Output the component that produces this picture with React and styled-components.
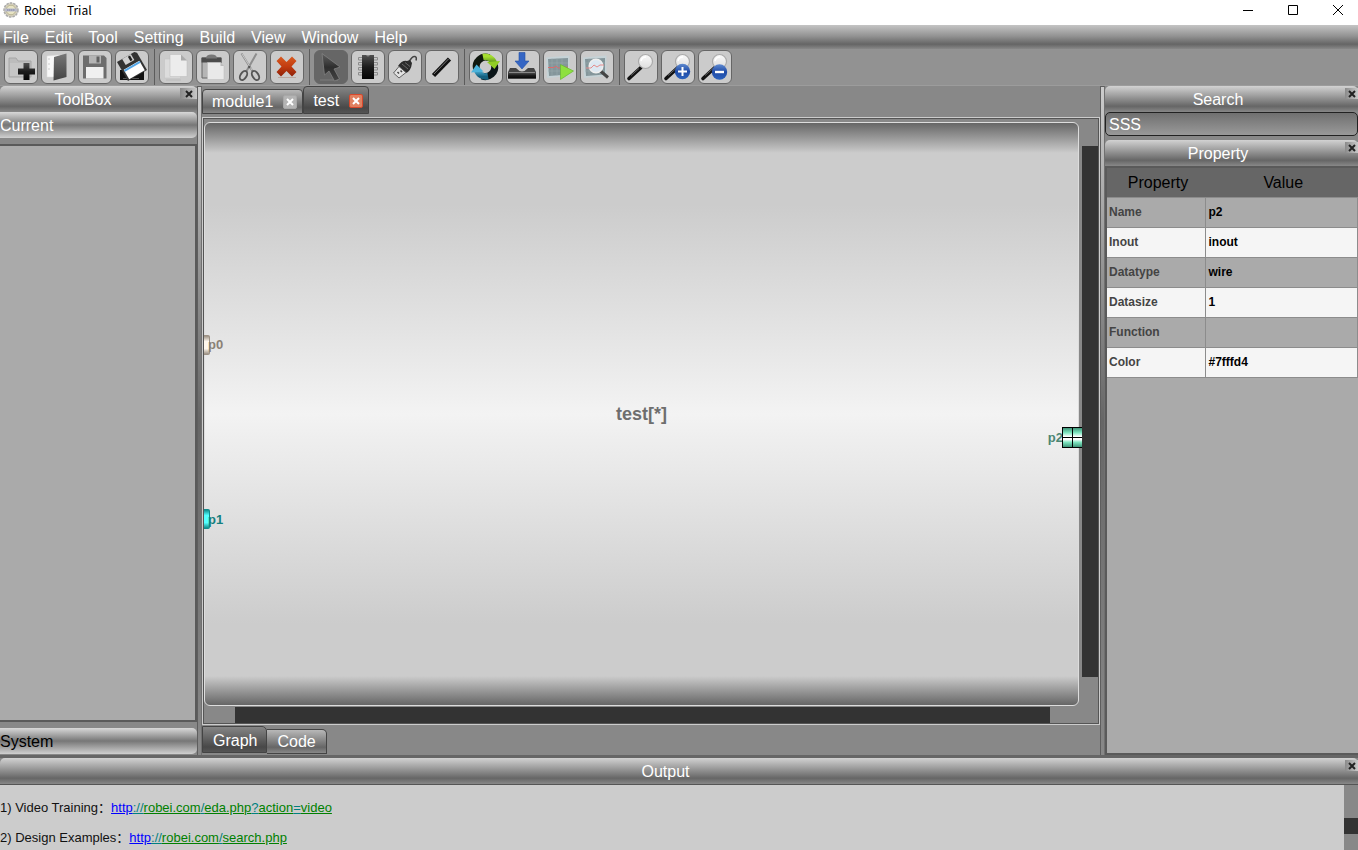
import React, { useState } from "react";
import styled, { createGlobalStyle, css } from "styled-components";

const toolGroups = [
  ["new", "open", "save", "saveAll"],
  ["copy", "paste", "cut", "remove"],
  ["select", "chip", "port", "wire"],
  ["refresh", "download", "run", "inspect"],
  ["zoom", "zoomIn", "zoomOut"],
];

const menus = ["File", "Edit", "Tool", "Setting", "Build", "View", "Window", "Help"];

const properties = [
  ["Name", "p2"],
  ["Inout", "inout"],
  ["Datatype", "wire"],
  ["Datasize", "1"],
  ["Function", ""],
  ["Color", "#7fffd4"],
];

const Magnifier = () => (
  <>
    <path d="M17 17.500 L5 28.500" stroke="#111" strokeWidth="3.600" strokeLinecap="round" />
    <path d="M15 18.500 L7 25.500" stroke="#777" strokeWidth="0.800" />
    <circle cx="21.500" cy="11.500" r="7" fill="url(#lens)" stroke="#aaa" strokeWidth="1.200" />
    <path d="M17 11 q1 -4 5 -4" stroke="#fff" strokeWidth="1.500" fill="none" />
  </>
);

const icons = {
  new: (
    <>
      <path d="M5 8 h7 l2 3 h13 v16 h-22z" fill="#bcbcbc" stroke="#a6a6a6" />
      <path d="M6 13 h20 v13 h-20z" fill="#c6c6c6" />
      <path d="M19.500 13 h6 v5.500 h5.500 v6 h-5.500 v5.500 h-6 v-5.500 h-5.500 v-6 h5.500z" fill="url(#dark)" />
    </>
  ),
  open: (
    <>
      <path d="M6 6 l13 -1 v22 l-13 0z" fill="#f8f8f8" stroke="#ddd" strokeWidth="0.500" />
      <path d="M7 9 h2 M7 14 h2 M7 19 h2" stroke="#ccc" />
      <path d="M13 7 l12.500 -3.500 v23.500 l-13 3.500z" fill="url(#door)" />
    </>
  ),
  save: (
    <>
      <path d="M5 5.500 h21 l2.500 2.500 v20.500 h-23.500z" fill="#6d6d6d" />
      <path d="M11 5.500 h12 v8 h-12z" fill="#b4b4b4" />
      <path d="M18.500 6.500 h3 v6 h-3z" fill="#606060" />
      <path d="M8 17 h17.500 v11.500 h-17.500z" fill="#f0f0f0" />
    </>
  ),
  saveAll: (
    <>
      <path d="M5 20 h24 v10 h-24z" fill="#111" />
      <path d="M8 28.500 h16" stroke="#555" />
      <g transform="rotate(-30 17 16)">
        <path d="M6 5 h20 l2 2 v20 h-22z" fill="#333" />
        <path d="M12 5 h10 v7 h-10z" fill="#d0d0d0" />
        <path d="M18 6 h2.500 v5 h-2.500z" fill="#222" />
        <path d="M8 15 h18 v11 h-18z" fill="#fff" />
        <path d="M8 15.500 h18 v2 h-18z" fill="#54a7e8" />
      </g>
    </>
  ),
  copy: (
    <>
      <path d="M5.500 9 h16 v19 h-16z" fill="#dcdcdc" stroke="#c0c0c0" strokeWidth="0.500" />
      <path d="M11 4.500 h11 l6 6 v16 h-17z" fill="#ececec" stroke="#bbb" strokeWidth="0.500" />
      <path d="M22 4.500 l6 6 h-6z" fill="#aaa" />
      <path d="M7 30 h15" stroke="#bbb" />
    </>
  ),
  paste: (
    <>
      <path d="M6 8 h19 v20 h-19z" fill="#b5b5b5" stroke="#666" />
      <path d="M5.500 7.500 h20 v5 h-20z" fill="#4c4c4c" />
      <path d="M10 8.500 q0 -4 5.500 -4 q5.500 0 5.500 4z" fill="#777" />
      <path d="M11.500 12.500 h13 l3.500 3.500 v13.500 h-16.500z" fill="#e9e9e9" stroke="#bbb" strokeWidth="0.500" />
      <path d="M24.500 12.500 v3.500 h3.500z" fill="#bbb" />
    </>
  ),
  cut: (
    <>
      <path d="M8.500 3.500 L20 22 M23.500 3.500 L13 22" stroke="#8e8e8e" strokeWidth="2" />
      <path d="M9 4 L19 20" stroke="#e2e2e2" strokeWidth="0.700" />
      <circle cx="16.300" cy="17" r="1.200" fill="#555" />
      <ellipse cx="10.500" cy="25.500" rx="3" ry="5" transform="rotate(32 10.500 25.500)" fill="none" stroke="#555" strokeWidth="1.900" />
      <ellipse cx="22.500" cy="25.500" rx="3" ry="5" transform="rotate(-32 22.500 25.500)" fill="none" stroke="#555" strokeWidth="1.900" />
    </>
  ),
  remove: (
    <>
      <path d="M8 27.500 h18" stroke="#bba8a0" />
      <path
        d="M11 6.500 l5.500 5.500 l5.500 -5.500 l4.500 4.500 l-5 5.500 l5 5.500 l-4.500 4.500 l-5.500 -5.500 l-5.500 5.500 l-4.500 -4.500 l5 -5.500 l-5 -5.500z"
        fill="url(#red)"
      />
    </>
  ),
  select: (
    <>
      <path d="M6 30 h18" stroke="#7c7c7c" />
      <path d="M8 3.500 L26 17 L20 19 L25.500 29 L20.500 31 L15 21 L10.500 25z" fill="url(#arrow)" stroke="#858585" strokeWidth="0.700" />
    </>
  ),
  chip: (
    <>
      <path
        d="M11 7.500 h-3.500 v2.500 h3.500 M11 12.500 h-3.500 v2.500 h3.500 M11 17.500 h-3.500 v2.500 h3.500 M11 22.500 h-3.500 v2.500 h3.500 M23 7.500 h3.500 v2.500 h-3.500 M23 12.500 h3.500 v2.500 h-3.500 M23 17.500 h3.500 v2.500 h-3.500 M23 22.500 h3.500 v2.500 h-3.500"
        fill="none"
        stroke="#8c8c8c"
      />
      <path d="M11 5 h12 v24 h-12z" fill="url(#dark)" />
      <path d="M15 5 h4 q-2 3 -4 0z" fill="#888" />
    </>
  ),
  port: (
    <>
      <path d="M21 12 q3 -6 6 -5.500 q2 .5 1 4" fill="none" stroke="#444" strokeWidth="1.500" />
      <path d="M22 10 l2 3 q-1 8 -6 10 l-8 -7 q4 -6 9 -5z" fill="#2b2b2b" />
      <path d="M14 14 l6 5 M17 12.500 l5 4" stroke="#777" strokeWidth="0.800" />
      <path d="M11 16.500 l7 6 l-7 5.500 l-5.500 -5z" fill="#e2e2e2" stroke="#555" strokeWidth="0.900" />
      <path d="M9.500 22 l1.500 1.500 M12.500 20.500 l1.500 1.500" stroke="#444" strokeWidth="1.500" />
    </>
  ),
  wire: (
    <>
      <path d="M8.500 25.500 L24.500 9" stroke="#111" strokeWidth="4.500" />
      <path d="M9 24 L23.500 9" stroke="#777" strokeWidth="1" />
    </>
  ),
  refresh: (
    <>
      <path d="M7.500 19 A9.500 9.500 0 0 1 20 7.700" fill="none" stroke="#10180f" strokeWidth="7" />
      <path d="M14 7 A9.500 9.500 0 0 1 25 13.500" fill="none" stroke="url(#green)" strokeWidth="6.500" />
      <path d="M25.500 15 A9.500 9.500 0 0 1 13 26" fill="none" stroke="#0a1418" strokeWidth="7" />
      <path d="M19 26.300 A9.500 9.500 0 0 1 8 20" fill="none" stroke="url(#blue)" strokeWidth="6.500" />
      <path d="M18 12 l13 -1 l-5.500 8z" fill="#91ce25" />
      <path d="M14.500 21.500 l-12.500 1 l5.500 -8z" fill="#4cb4dc" />
    </>
  ),
  download: (
    <>
      <path d="M4 18 h6 q6 7 12 0 h6 l2 4 v6.500 h-28 v-6.500z" fill="#444" />
      <path d="M2 22.500 h28 v6 h-28z" fill="url(#dark)" />
      <path d="M3 22.500 h26" stroke="#999" strokeWidth="0.800" />
      <path d="M13 2.500 h6 v8.500 h4 l-7 8 l-7 -8 h4z" fill="#3566c4" stroke="#2450a5" strokeWidth="0.600" />
    </>
  ),
  run: (
    <>
      <path d="M3 7.500 l23.500 -2 v20.500 l-22.500 2z" fill="#c5d2d6" />
      <path d="M5 9 l20 -1 v16.500 l-19 1.500z" fill="#84969b" />
      <path d="M9 8.500 v17 M14 8.500 v17 M19 8 v17 M5 13 h20 M5 21 h20" stroke="#9cabb0" strokeWidth="0.600" />
      <path d="M5 17.500 l6 0 l2 -1.500 l2 2 l10 -1" fill="none" stroke="#d86d6d" />
      <path d="M17.500 14.500 l13 6.500 l-13 8.500z" fill="#8ee040" stroke="#66b82e" strokeWidth="0.700" />
    </>
  ),
  inspect: (
    <>
      <path d="M3 7.500 l23.500 -2 v20.500 l-22.500 2z" fill="#c5d2d6" />
      <path d="M5 9 l20 -1 v16.500 l-19 1.500z" fill="#84969b" />
      <path d="M9 8.500 v17 M20 8 v17 M5 13 h20 M5 21 h20" stroke="#9cabb0" strokeWidth="0.600" />
      <path d="M20.500 21 L28 27.500" stroke="#444" strokeWidth="3" />
      <circle cx="16" cy="16" r="6.800" fill="#dce8f2" stroke="#eee" strokeWidth="1.500" />
      <path d="M6 18 h5 l3 -3 l3 2 l3 -2 h4" fill="none" stroke="#e48c8c" />
    </>
  ),
  zoom: <Magnifier />,
  zoomIn: (
    <>
      <Magnifier />
      <circle cx="21.500" cy="21.500" r="7.700" fill="url(#badge)" />
      <path d="M17 21.500 h9 M21.500 17 v9" stroke="#fff" strokeWidth="2" />
    </>
  ),
  zoomOut: (
    <>
      <Magnifier />
      <circle cx="21.500" cy="22" r="7.700" fill="url(#badge)" />
      <path d="M17 22 h9" stroke="#fff" strokeWidth="2.400" />
    </>
  ),
};

const Gradient = ({ id, stops }) => (
  <linearGradient id={id} x1="0" y1="0" x2="0" y2="1">
    {stops.map((color, i) => (
      <stop key={i} offset={i / (stops.length - 1)} stopColor={color} />
    ))}
  </linearGradient>
);

const IconColors = () => (
  <HiddenSvg aria-hidden="true">
    <defs>
      <Gradient id="dark" stops={["#505050", "#1c1c1c", "#050505"]} />
      <Gradient id="arrow" stops={["#606060", "#2e2e2e", "#444"]} />
      <Gradient id="door" stops={["#777", "#444"]} />
      <Gradient id="red" stops={["#d85a20", "#c23c10", "#8e2008"]} />
      <Gradient id="green" stops={["#a5dd30", "#4c8618"]} />
      <Gradient id="blue" stops={["#55bce4", "#14607f"]} />
      <Gradient id="badge" stops={["#5f8ad0", "#1f4ba6", "#2c62bd"]} />
      <Gradient id="lens" stops={["#fafafa", "#dedede"]} />
    </defs>
  </HiddenSvg>
);

const Cross = ({ size = 8 }) => (
  <svg width={size} height={size} viewBox="0 0 8 8" aria-hidden="true">
    <path d="M1 1 L7 7 M7 1 L1 7" stroke="currentColor" strokeWidth="2" />
  </svg>
);

const DockHeader = ({ title, edge }) => (
  <StyledDockHeader>
    <h2>{title}</h2>
    <DockClose $edge={edge} aria-label={"Close " + title}>
      <Cross />
    </DockClose>
  </StyledDockHeader>
);

const Url = ({ parts }) => (
  <StyledLink href={parts.join("")}>
    {parts.map((part, i) => (
      <UrlPart key={i} $kind={i === 0 ? "scheme" : i % 2 ? "mark" : "word"}>
        {part}
      </UrlPart>
    ))}
  </StyledLink>
);

const App = () => {
  const [tool, setTool] = useState("select");
  const [search, setSearch] = useState("SSS");

  return (
    <Shell>
      <GlobalStyle />
      <IconColors />
      <TitleBar>
        <svg width="16" height="16" viewBox="0 0 16 16" aria-hidden="true">
          <circle cx="8" cy="8" r="7" fill="#d5d0bd" stroke="#aaa" strokeWidth="1.500" strokeDasharray="2.500 1" />
          <circle cx="8" cy="8" r="4.800" fill="#e8e4c4" stroke="#b9b594" />
          <path d="M2 6.500 h12 v3 h-12z" fill="#b8bacb" />
          <path d="M4 8 h8" stroke="#7d80a0" strokeDasharray="1.500 .5" />
        </svg>
        <h1>Robei    Trial</h1>
        <WindowButtons>
          <button aria-label="Minimize">
            <svg width="10" height="10" viewBox="0 0 10 10">
              <path d="M0 5.500 h10" stroke="#000" />
            </svg>
          </button>
          <button aria-label="Maximize">
            <svg width="10" height="10" viewBox="0 0 10 10">
              <path d="M.5 .5 h9 v9 h-9z" stroke="#000" fill="none" />
            </svg>
          </button>
          <button aria-label="Close">
            <svg width="10" height="10" viewBox="0 0 10 10">
              <path d="M0 0 L10 10 M10 0 L0 10" stroke="#000" />
            </svg>
          </button>
        </WindowButtons>
      </TitleBar>

      <MenuBar>
        {menus.map((menu) => (
          <button key={menu}>{menu}</button>
        ))}
      </MenuBar>

      <ToolBar>
        {toolGroups.map((group, i) => (
          <ToolGroup key={i}>
            {group.map((name) => (
              <ToolButton key={name} $active={tool === name} aria-label={name} onClick={() => setTool(name)}>
                <svg width="32" height="32" viewBox="1 1 32 32" fill="none">
                  {icons[name]}
                </svg>
              </ToolButton>
            ))}
          </ToolGroup>
        ))}
      </ToolBar>

      <Workspace>
        <ToolBox>
          <DockHeader title="ToolBox" />
          <Category $light>Current</Category>
          <CategoryList />
          <Category>System</Category>
        </ToolBox>
        <Splitter />

        <Editor>
          <FileTabs>
            <FileTab>
              <button>module1</button>
              <TabClose aria-label="Close module1">
                <Cross />
              </TabClose>
            </FileTab>
            <FileTab $active>
              <button>test</button>
              <TabClose $active aria-label="Close test">
                <Cross />
              </TabClose>
            </FileTab>
          </FileTabs>
          <Frame>
            <Module>
              <ModuleName>test[*]</ModuleName>
              <Port $top="38%" $color="#8a8175">
                <Pin $edge="#9c9184" $fill="#fff8ee" />
                p0
              </Port>
              <Port $top="68%" $color="#168080">
                <Pin $edge="#118c8c" $fill="#55ffff" />
                p1
              </Port>
              <Port $top="54%" $color="#4c8674" $right>
                p2
                <SelectedPin />
              </Port>
            </Module>
            <VerticalBar />
            <HorizontalBar />
          </Frame>
          <ViewTabs>
            <ViewTab $active>Graph</ViewTab>
            <ViewTab>Code</ViewTab>
          </ViewTabs>
        </Editor>
        <Splitter />

        <SideDock>
          <DockHeader title="Search" edge />
          <SearchInput aria-label="Search" value={search} onChange={(e) => setSearch(e.target.value)} />
          <DockHeader title="Property" edge />
          <PropertyPane>
            <PropertyTable>
              <thead>
                <tr>
                  <th>Property</th>
                  <th>Value</th>
                </tr>
              </thead>
              <tbody>
                {properties.map(([name, value]) => (
                  <tr key={name}>
                    <td>{name}</td>
                    <td>{value}</td>
                  </tr>
                ))}
              </tbody>
            </PropertyTable>
          </PropertyPane>
        </SideDock>
      </Workspace>

      <Output>
        <DockHeader title="Output" edge />
        <OutputBody>
          <OutputText>
            <p>
              1) Video Training：
              <Url parts={["http", "://", "robei.com", "/", "eda.php", "?", "action", "=", "video"]} />
            </p>
            <p>
              2) Design Examples：
              <Url parts={["http", "://", "robei.com", "/", "search.php"]} />
            </p>
          </OutputText>
          <OutputScroll />
        </OutputBody>
      </Output>
    </Shell>
  );
};

const GlobalStyle = createGlobalStyle`
  * {
    box-sizing: border-box;
    margin: 0;
    padding: 0;
  }
  body {
    font-family: "Liberation Sans", "Noto Sans CJK SC", sans-serif;
    font-size: 16px;
    background: #888;
  }
  button {
    font: inherit;
    color: inherit;
    background: none;
    border: none;
  }
  svg {
    display: block;
  }
`;

const barGradient = css`
  background: linear-gradient(#d2d2d2, #a2a2a2 35%, #666 78%, #888);
`;

const Shell = styled.div`
  display: flex;
  flex-direction: column;
  height: 100vh;
  overflow: hidden;
`;

const HiddenSvg = styled.svg`
  position: absolute;
  width: 0;
  height: 0;
`;

const TitleBar = styled.header`
  display: flex;
  align-items: center;
  flex: 0 0 25px;
  padding: 0 15px 6px 3px;
  background: white;
  h1 {
    flex: 1;
    padding-left: 5px;
    font: 12px/18px "Noto Sans CJK SC", sans-serif;
    white-space: pre;
  }
`;

const WindowButtons = styled.div`
  display: flex;
  gap: 35px;
`;

const MenuBar = styled.nav`
  display: flex;
  align-items: center;
  gap: 16px;
  flex: 0 0 24px;
  padding: 2px 0 0 3px;
  color: white;
  background: linear-gradient(#c4c4c4, #949494 45%, #656565 80%, #888);
`;

const ToolBar = styled.div`
  display: flex;
  flex: 0 0 37px;
  padding-left: 4px;
  background: #929292;
  border-bottom: 1px solid #9c9c9c;
`;

const ToolGroup = styled.div`
  display: flex;
  align-items: center;
  gap: 3px;
  padding-right: 5px;
  & + & {
    padding-left: 4px;
    border-left: 1px solid #5c5c5c;
  }
`;

const ToolButton = styled.button`
  width: 34px;
  height: 34px;
  border: 1px solid #666;
  border-radius: 6px;
  background: ${(props) => (props.$active ? "#666" : "#cbcbcb")};
`;

const Workspace = styled.main`
  display: flex;
  flex: 1;
  min-height: 0;
`;

const ToolBox = styled.aside`
  display: flex;
  flex-direction: column;
  flex: 0 0 197px;
  padding-bottom: 1px;
`;

const StyledDockHeader = styled.div`
  display: flex;
  align-items: flex-start;
  gap: 14px;
  flex: 0 0 26px;
  border-radius: 5px 5px 0 0;
  color: white;
  ${barGradient}
  h2 {
    flex: 1;
    height: 26px;
    font-size: 16px;
    font-weight: normal;
    line-height: 28px;
    text-align: center;
  }
`;

const DockClose = styled.button`
  display: flex;
  align-items: center;
  justify-content: center;
  width: ${(props) => (props.$edge ? "13px" : "17px")};
  height: 11px;
  margin-top: 2px;
  color: #222;
  background: linear-gradient(90deg, #8a8a8a, #c8c8c8);
`;

const Category = styled.button`
  flex: 0 0 26px;
  padding-top: 2px;
  border-radius: 0 5px 5px 0;
  text-align: left;
  color: ${(props) => (props.$light ? "white" : "black")};
  background: linear-gradient(#d8d8d8, #777 50%, #d0d0d0);
`;

const CategoryList = styled.div`
  flex: 1;
  margin: 6px 0;
  border: 2px solid #5a5a5a;
  border-left: none;
  background: #aaa;
`;

const Splitter = styled.div`
  flex: 0 0 5px;
  border: solid #5e5e5e;
  border-width: 1px 1px 0 1px;
  border-right-color: #707070;
  background: linear-gradient(#ccc, #666 50%, #888);
`;

const Editor = styled.section`
  display: flex;
  flex-direction: column;
  flex: 1;
  min-width: 0;
  color: white;
  background: #888;
`;

const FileTabs = styled.div`
  display: flex;
  align-items: flex-end;
  height: 28px;
  margin-bottom: 3px;
`;

const FileTab = styled.div`
  display: flex;
  align-items: center;
  gap: 10px;
  height: ${(props) => (props.$active ? "28px" : "25px")};
  padding: ${(props) => (props.$active ? "2px 5px 0 9px" : "0 5px 0 9px")};
  border: 1px solid #444;
  border-radius: 4px 4px 0 0;
  background: ${(props) =>
    props.$active ? "linear-gradient(#858585, #484848 80%, #555)" : "linear-gradient(#b8b8b8, #666 75%, #888)"};
`;

const TabClose = styled.button`
  display: flex;
  align-items: center;
  justify-content: center;
  width: 14px;
  height: 14px;
  border: 1px solid ${(props) => (props.$active ? "#d8482c" : "#a8a8a8")};
  border-radius: 2px;
  color: white;
  background: ${(props) => (props.$active ? "#e08060" : "#b4b4b4")};
`;

const Frame = styled.div`
  display: grid;
  grid-template: 1fr 16px / 1fr 16px;
  flex: 1;
  min-height: 0;
  border: 1px solid #ccc;
  outline: 1px solid #555;
  outline-offset: -2px;
  padding: 1px;
`;

const Module = styled.div`
  position: relative;
  display: flex;
  align-items: center;
  justify-content: center;
  margin: 3px 3px 1px 0;
  border: 1px solid #ddd;
  border-radius: 6px;
  background: linear-gradient(#666, #ccc 30px, #ccc 14%, #f3f3f3 50%, #ccc 86%, #ccc calc(100% - 29px), #666);
`;

const ModuleName = styled.h3`
  font-size: 18px;
  color: #6e6e6e;
`;

const Port = styled.div`
  position: absolute;
  top: ${(props) => props.$top};
  ${(props) => (props.$right ? "right: -4px;" : "left: -1px;")}
  display: flex;
  align-items: center;
  height: 21px;
  margin-top: -10px;
  font-size: 13px;
  font-weight: bold;
  color: ${(props) => props.$color};
`;

const Pin = styled.span`
  width: 6px;
  height: 20px;
  margin-right: -2px;
  border: 1px solid ${(props) => props.$edge};
  border-left: none;
  border-radius: 0 2px 2px 0;
  background: linear-gradient(
    ${(props) => `${props.$edge}, ${props.$fill} 30%, ${props.$fill} 70%, ${props.$edge}`}
  );
`;

const SelectedPin = styled.span`
  width: 20px;
  height: 21px;
  margin-left: -1px;
  border: 1px solid black;
  border-right: none;
  background:
    linear-gradient(black, black) center / 1px 100% no-repeat,
    linear-gradient(black, black) center / 100% 1px no-repeat,
    linear-gradient(#3f9478, #7fe6c0 25%, #fff 45%, #fff 60%, #7fe6c0 75%, #3f9478);
`;

const VerticalBar = styled.div`
  margin: 27px 0 30px;
  background: #333;
`;

const HorizontalBar = styled.div`
  margin: 0 32px 0 31px;
  background: #333;
`;

const ViewTabs = styled.div`
  display: flex;
  align-items: flex-start;
  height: 30px;
  padding-top: 1px;
`;

const ViewTab = styled.button`
  height: ${(props) => (props.$active ? "27px" : "25px")};
  margin-top: ${(props) => (props.$active ? "0" : "3px")};
  padding: ${(props) => (props.$active ? "2px 9px 0 10px" : "0 10px")};
  border: 1px solid #444;
  border-radius: 0 5px 0 0;
  background: ${(props) =>
    props.$active ? "linear-gradient(#858585, #484848 80%, #555)" : "linear-gradient(#b8b8b8, #666 75%, #888)"};
  & + & {
    border-left: none;
  }
`;

const SideDock = styled.aside`
  display: flex;
  flex-direction: column;
  flex: 0 0 253px;
`;

const SearchInput = styled.input`
  height: 24px;
  margin-bottom: 4px;
  padding: 2px 3px 0;
  border: 1px solid #222;
  border-radius: 5px;
  font: inherit;
  color: white;
  background: linear-gradient(#707070, #999);
`;

const PropertyPane = styled.div`
  flex: 1;
  border: solid #5a5a5a;
  border-width: 2px 0 2px 2px;
  background: #aaa;
`;

const PropertyTable = styled.table`
  width: 100%;
  border-collapse: collapse;
  table-layout: fixed;
  th {
    height: 29px;
    padding: 1px 0 0 4px;
    font-weight: normal;
    line-height: 18px;
    background: #666;
  }
  th:first-child {
    width: 98px;
  }
  td {
    height: 30px;
    padding-left: 3px;
    border: 1px solid #8c8c8c;
    font-size: 12px;
    font-weight: bold;
  }
  td:first-child {
    padding-left: 2px;
    border-left: none;
    color: #444;
  }
  tbody tr:nth-child(even) {
    background: #f5f5f5;
  }
`;

const Output = styled.section`
  flex: 0 0 95px;
  display: flex;
  flex-direction: column;
  border-top: 3px solid #666;
`;

const OutputBody = styled.div`
  display: flex;
  flex: 1;
  min-height: 0;
  border-top: 1px solid #555;
`;

const OutputText = styled.div`
  flex: 1;
  overflow: hidden;
  font-size: 13px;
  line-height: 15px;
  color: #111;
  background: #ccc;
  p {
    margin-top: 15px;
  }
`;

const StyledLink = styled.a`
  text-decoration: none;
`;

const urlColors = { scheme: "#00f", mark: "#008080", word: "#008000" };

const UrlPart = styled.span`
  color: ${(props) => urlColors[props.$kind]};
  text-decoration: underline;
`;

const OutputScroll = styled.div`
  width: 14px;
  padding-top: 33px;
  &::before {
    content: "";
    display: block;
    height: 16px;
    background: #333;
  }
`;

export default App;
